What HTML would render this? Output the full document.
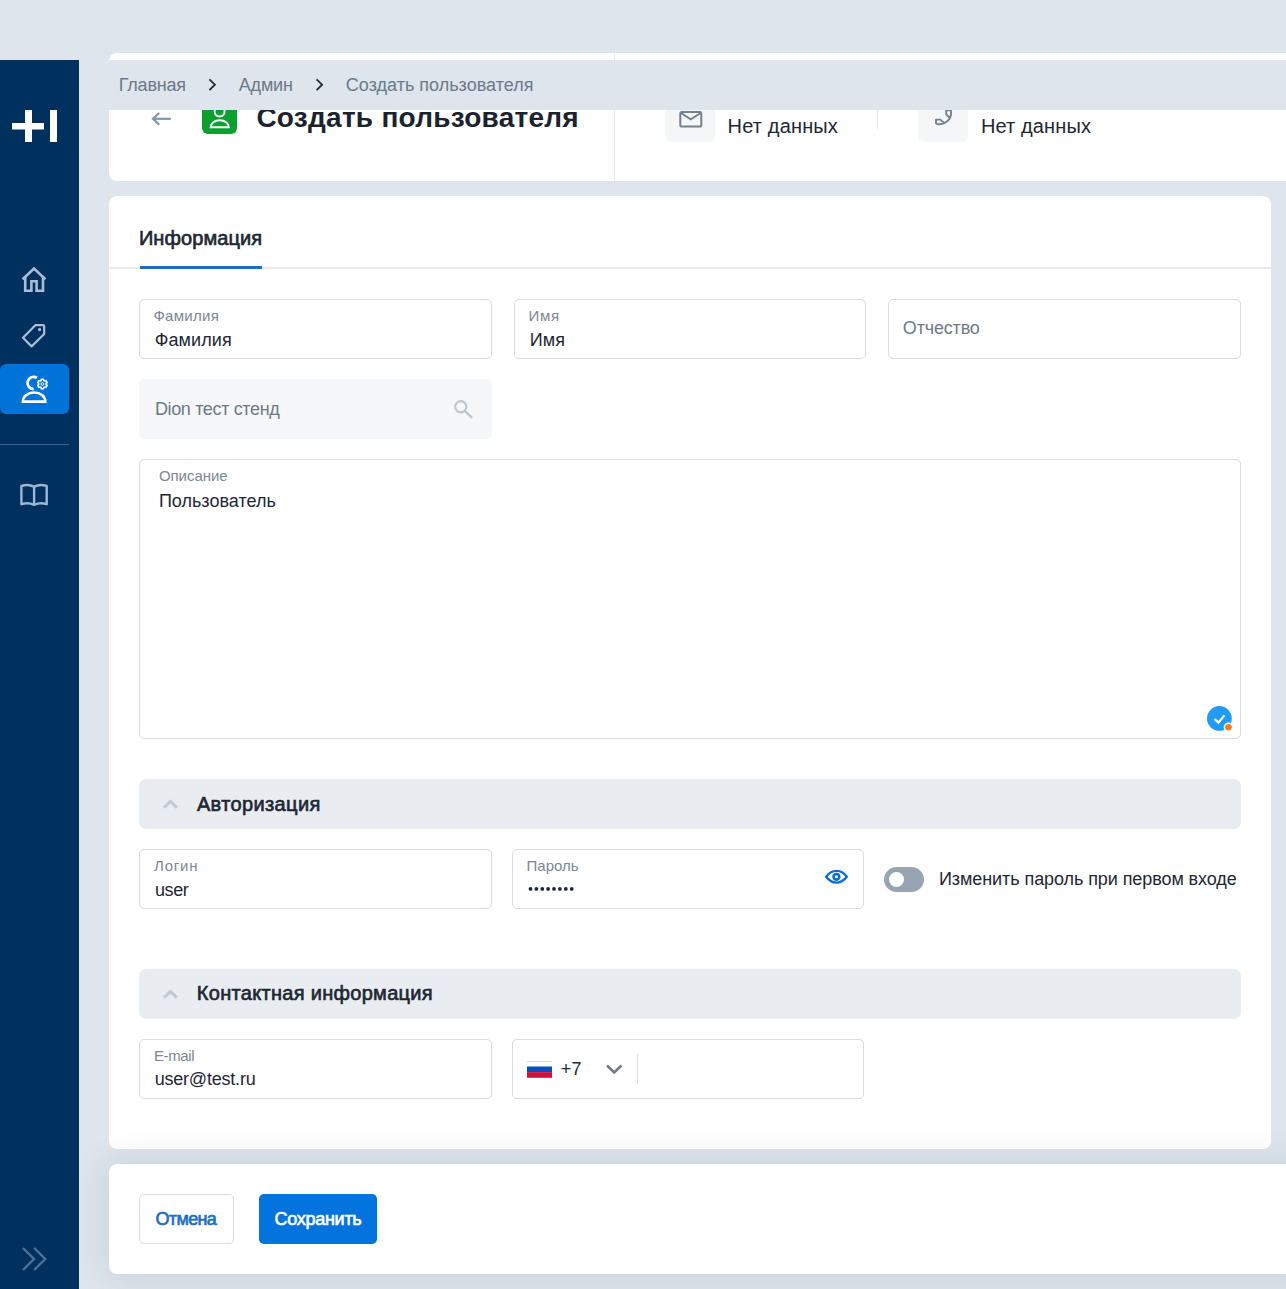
<!DOCTYPE html>
<html lang="ru">
<head>
<meta charset="utf-8">
<title>Создать пользователя</title>
<style>
html,body{margin:0;padding:0;}
body{width:1286px;height:1289px;overflow:hidden;position:relative;background:#dee5ec;font-family:"Liberation Sans",sans-serif;}
.a{position:absolute;box-sizing:border-box;}
.t{position:absolute;white-space:pre;font-family:"Liberation Sans",sans-serif;}
.card{background:#fff;border-radius:8px;}
.fld{border:1px solid #d9dcdf;border-radius:5px;background:#fff;}
.sec{background:#e9edf1;border-radius:7px;}
svg.ov{position:absolute;left:0;top:0;}
</style>
</head>
<body>
<!-- sidebar -->
<div class="a" style="left:0;top:60px;width:79px;height:1229px;background:#00315e;z-index:1"></div>
<div class="a" style="left:0;top:364px;width:69px;height:50px;background:#0073d9;border-radius:6px;z-index:1"></div>
<div class="a" style="left:0;top:444px;width:69px;height:1px;background:#3a6792;z-index:1"></div>

<!-- header card -->
<div class="a card" style="left:109px;top:53px;width:1200px;height:128px;z-index:1"></div>
<div class="a" style="left:614px;top:53px;width:1px;height:128px;background:#e6eaef;z-index:1"></div>
<div class="a" style="left:202px;top:98px;width:35px;height:36px;background:#0a9f2f;border-radius:6px;z-index:1"></div>
<div class="a" style="left:665px;top:92px;width:50px;height:50px;background:#f4f6f8;border-radius:7px;z-index:1"></div>
<div class="a" style="left:918px;top:92px;width:50px;height:50px;background:#f4f6f8;border-radius:7px;z-index:1"></div>
<div class="a" style="left:877px;top:100px;width:1px;height:29px;background:#e6eaef;z-index:1"></div>

<!-- breadcrumb overlay -->
<div class="a" style="left:79px;top:60px;width:1207px;height:50px;background:#dee5ec;z-index:5"></div>

<!-- info card -->
<div class="a card" style="left:109px;top:196px;width:1162px;height:953px;z-index:1"></div>
<div class="a" style="left:109px;top:267px;width:1162px;height:2px;background:#e8ecf0;z-index:1"></div>
<div class="a" style="left:140px;top:266px;width:122px;height:3px;background:#1b6fc6;z-index:2"></div>

<div class="a fld" style="left:139px;top:299px;width:353px;height:60px;z-index:1"></div>
<div class="a fld" style="left:514px;top:299px;width:352px;height:60px;z-index:1"></div>
<div class="a fld" style="left:888px;top:299px;width:353px;height:60px;z-index:1"></div>
<div class="a" style="left:139px;top:379px;width:353px;height:60px;background:#f5f7f9;border-radius:5px;z-index:1"></div>
<div class="a fld" style="left:139px;top:459px;width:1102px;height:280px;z-index:1"></div>

<div class="a sec" style="left:139px;top:779px;width:1102px;height:50px;z-index:1"></div>
<div class="a fld" style="left:139px;top:849px;width:353px;height:60px;z-index:1"></div>
<div class="a fld" style="left:512px;top:849px;width:352px;height:60px;z-index:1"></div>
<div class="a" style="left:884px;top:867px;width:40px;height:25px;background:#98a4b1;border-radius:13px;z-index:1"></div>
<div class="a" style="left:888.9px;top:871.9px;width:15px;height:15px;background:#fff;border-radius:50%;z-index:2"></div>

<div class="a sec" style="left:139px;top:969px;width:1102px;height:50px;z-index:1"></div>
<div class="a fld" style="left:139px;top:1039px;width:353px;height:60px;z-index:1"></div>
<div class="a fld" style="left:512px;top:1039px;width:352px;height:60px;z-index:1"></div>
<div class="a" style="left:637px;top:1054px;width:1px;height:30px;background:#d9dee3;z-index:2"></div>

<!-- footer -->
<div class="a card" style="left:109px;top:1164px;width:1200px;height:110px;z-index:1;box-shadow:0 0 36px rgba(45,65,95,0.14)"></div>
<div class="a" style="left:139px;top:1194px;width:95px;height:50px;border:1px solid #d9dcdf;border-radius:5px;background:#fff;z-index:2"></div>
<div class="a" style="left:259px;top:1194px;width:118px;height:50px;background:#0272dc;border-radius:5px;z-index:2"></div>

<!-- icons -->
<svg class="ov" width="1286" height="1289" viewBox="0 0 1286 1289" style="z-index:3" fill="none">
  <!-- logo -->
  <rect x="25" y="110" width="7" height="32" fill="#fff"/>
  <rect x="12" y="123" width="32" height="6.5" fill="#fff"/>
  <rect x="50" y="110" width="7" height="32" fill="#fff"/>
  <!-- home -->
  <g stroke="#a9bdd6" stroke-width="2.6" stroke-linejoin="miter">
    <path d="M22.6 279.2 L34 268.6 L45.4 279.2"/>
    <path d="M25.2 276.5 V290.7 H31.4 V281.2 H36.6 V290.7 H43 V276.5"/>
  </g>
  <!-- tag -->
  <g stroke="#a9bdd6" stroke-width="2.2" stroke-linejoin="round">
    <path d="M35.3 325.2 H42.8 Q44.2 325.2 44.2 326.6 V334 L31.6 346.4 L23 337.8 Z"/>
  </g>
  <circle cx="39.6" cy="329.6" r="1.6" fill="#a9bdd6"/>
  <!-- admin -->
  <g stroke="#fff" stroke-width="2.6" fill="none">
    <path d="M36.87 377.85 A6.1 6.1 0 1 0 33.7 389.1" stroke-width="2.8"/>
    <path d="M22.9 401.6 A10.5 8.6 0 0 1 45.3 401.6 Z"/>
  </g>
  <g transform="translate(0 0)">
    <path d="M43.52 379.13 L41.28 379.13 L41.07 380.55 L40.07 381.12 L38.74 380.59 L37.62 382.54 L38.75 383.42 L38.75 384.58 L37.62 385.46 L38.74 387.41 L40.07 386.88 L41.07 387.45 L41.28 388.87 L43.52 388.87 L43.73 387.45 L44.73 386.88 L46.06 387.41 L47.18 385.46 L46.05 384.58 L46.05 383.42 L47.18 382.54 L46.06 380.59 L44.73 381.12 L43.73 380.55 Z" stroke="#fff" stroke-width="1.5" stroke-linejoin="round" fill="none"/>
    <circle cx="42.4" cy="384.0" r="1.4" stroke="#fff" stroke-width="1" fill="none"/>
  </g>
  <!-- book -->
  <g stroke="#9db6d3" stroke-width="2.4" stroke-linejoin="round">
    <path d="M21.4 486 Q28 483.6 34.1 486.6 Q40.2 483.6 46.7 486 V504.2 Q40.2 502 34.1 504.8 Q28 502 21.4 504.2 Z"/>
    <path d="M34.1 486.6 V504.8"/>
  </g>
  <!-- collapse chevrons -->
  <g stroke="#4b7298" stroke-width="2.4">
    <path d="M23 1248 L34 1259 L23 1270"/>
    <path d="M34.2 1248 L45.2 1259 L34.2 1270"/>
  </g>
  <!-- back arrow -->
  <g stroke="#8593a3" stroke-width="2.2" stroke-linecap="butt">
    <path d="M153 118.8 H170.8"/>
    <path d="M159.2 113 L153 118.8 L159.2 124.8"/>
  </g>
  <!-- green user icon -->
  <g stroke="#fff" stroke-width="2">
    <circle cx="219.6" cy="111.6" r="5"/>
    <path d="M210.7 127.2 A9.05 7 0 0 1 228.8 127.2 Z"/>
  </g>
  <!-- mail -->
  <rect x="680.3" y="112" width="21" height="14.6" rx="1.6" stroke="#75818c" stroke-width="2"/>
  <path d="M681 113 L690.8 119.3 L700.6 113" stroke="#75818c" stroke-width="2"/>
  <!-- phone -->
  <path d="M946.2 110.4 H950.6 M946.2 109 V114.2 L949.4 117.8 M950.6 109 Q952 115 949.3 119.2 Q945 124.6 938.2 124.2 Q936 124 936 123.5 V119.6 H940.4 L943.8 122.6" stroke="#75818c" stroke-width="1.9" stroke-linejoin="round"/>
  <!-- search -->
  <circle cx="460.8" cy="406.8" r="5.6" stroke="#bfc6cd" stroke-width="2.2"/>
  <path d="M465 411 L471.3 417.2" stroke="#bfc6cd" stroke-width="2.4" stroke-linecap="round"/>
  <!-- grammar check badge -->
  <circle cx="1219.4" cy="718.4" r="12.4" fill="#229bf5"/>
  <path d="M1214.6 719 L1218.4 722.6 L1224.4 715.4" stroke="#fff" stroke-width="2.2"/>
  <circle cx="1228.5" cy="727.3" r="4.8" fill="#fff"/>
  <circle cx="1228.5" cy="727.3" r="3.3" fill="#f07d22"/>
  <!-- section chevrons -->
  <g stroke="#c2cad2" stroke-width="3">
    <path d="M164 807.6 L170.4 801.4 L176.8 807.6"/>
    <path d="M164 997.6 L170.4 991.4 L176.8 997.6"/>
  </g>
  <!-- eye -->
  <g stroke="#0a6fcf" stroke-width="2.3">
    <path d="M826.2 876.8 C829.5 872.3 833 870.9 836.5 870.9 C840 870.9 843.5 872.3 846.8 876.8 C843.5 881.3 840 882.7 836.5 882.7 C833 882.7 829.5 881.3 826.2 876.8 Z"/>
    <circle cx="836.4" cy="876.8" r="2.85" stroke-width="2.6"/>
  </g>
  <!-- password dots -->
  <g fill="#1d2733">
    <circle cx="530.5" cy="888.9" r="1.9"/><circle cx="536.4" cy="888.9" r="1.9"/><circle cx="542.3" cy="888.9" r="1.9"/><circle cx="548.1" cy="888.9" r="1.9"/>
    <circle cx="554" cy="888.9" r="1.9"/><circle cx="559.9" cy="888.9" r="1.9"/><circle cx="565.8" cy="888.9" r="1.9"/><circle cx="571.7" cy="888.9" r="1.9"/>
  </g>
  <!-- flag -->
  <rect x="527" y="1061" width="25" height="5.6" fill="#fff"/>
  <rect x="527" y="1061" width="25" height="0.8" fill="#c9d3dc"/>
  <rect x="527" y="1066.5" width="25" height="5.6" fill="#0b4fbd"/>
  <rect x="527" y="1072.1" width="25" height="5.7" fill="#d3103b"/>
  <!-- phone dropdown chevron -->
  <path d="M607 1065.5 L614.2 1072.5 L621.4 1065.5" stroke="#6f7b88" stroke-width="2.5"/>
</svg>

<svg class="ov" width="1286" height="1289" viewBox="0 0 1286 1289" style="z-index:6" fill="none">
  <g stroke="#1f2a36" stroke-width="1.8">
    <path d="M209.4 79.3 L214.9 84.7 L209.4 90.1"/>
    <path d="M316.6 79.3 L322.1 84.7 L316.6 90.1"/>
  </g>
</svg>
<div class="t" style="z-index:6;left:118.7px;top:75.6px;font-size:18px;line-height:18px;font-weight:400;color:#6b7a8a;letter-spacing:-0.183px">Главная</div>
<div class="t" style="z-index:6;left:238.8px;top:75.6px;font-size:18px;line-height:18px;font-weight:400;color:#6b7a8a;letter-spacing:-0.200px">Админ</div>
<div class="t" style="z-index:6;left:345.8px;top:75.6px;font-size:18px;line-height:18px;font-weight:400;color:#6b7a8a;letter-spacing:0.011px">Создать пользователя</div>
<div class="t" style="z-index:2;left:256.4px;top:103.6px;font-size:28px;line-height:28px;font-weight:700;color:#1a232e;letter-spacing:0.258px">Создать пользователя</div>
<div class="t" style="z-index:2;left:727.6px;top:115.7px;font-size:20px;line-height:20px;font-weight:400;color:#1d2733;letter-spacing:0.156px">Нет данных</div>
<div class="t" style="z-index:2;left:981.0px;top:115.7px;font-size:20px;line-height:20px;font-weight:400;color:#1d2733;letter-spacing:0.111px">Нет данных</div>
<div class="t" style="z-index:2;left:727.8px;top:94.0px;font-size:15px;line-height:15px;font-weight:400;color:#7b8794;letter-spacing:0.040px">E-mail</div>
<div class="t" style="z-index:2;left:982.1px;top:94.0px;font-size:15px;line-height:15px;font-weight:400;color:#7b8794;letter-spacing:-0.517px">Телефон</div>
<div class="t" style="z-index:2;left:138.9px;top:227.6px;font-size:20px;line-height:20px;font-weight:400;-webkit-text-stroke:0.65px currentColor;color:#1d2733;letter-spacing:0.089px">Информация</div>
<div class="t" style="z-index:2;left:153.4px;top:307.6px;font-size:15px;line-height:15px;font-weight:400;color:#7b8794;letter-spacing:0.300px">Фамилия</div>
<div class="t" style="z-index:2;left:154.7px;top:330.8px;font-size:18px;line-height:18px;font-weight:400;color:#1d2733;letter-spacing:0.100px">Фамилия</div>
<div class="t" style="z-index:2;left:528.6px;top:307.6px;font-size:15px;line-height:15px;font-weight:400;color:#7b8794;letter-spacing:0.700px">Имя</div>
<div class="t" style="z-index:2;left:529.7px;top:330.7px;font-size:18px;line-height:18px;font-weight:400;color:#1d2733;letter-spacing:0.100px">Имя</div>
<div class="t" style="z-index:2;left:902.8px;top:318.8px;font-size:18px;line-height:18px;font-weight:400;color:#6e7a87;letter-spacing:-0.171px">Отчество</div>
<div class="t" style="z-index:2;left:154.9px;top:399.8px;font-size:18px;line-height:18px;font-weight:400;color:#6e7a87;letter-spacing:-0.350px">Dion тест стенд</div>
<div class="t" style="z-index:2;left:158.9px;top:467.9px;font-size:15px;line-height:15px;font-weight:400;color:#7b8794;letter-spacing:-0.029px">Описание</div>
<div class="t" style="z-index:2;left:158.9px;top:492.0px;font-size:18px;line-height:18px;font-weight:400;color:#1d2733;letter-spacing:0.009px">Пользователь</div>
<div class="t" style="z-index:2;left:196.9px;top:794.2px;font-size:20px;line-height:20px;font-weight:400;-webkit-text-stroke:0.65px currentColor;color:#1d2733;letter-spacing:0.380px">Авторизация</div>
<div class="t" style="z-index:2;left:154.1px;top:857.7px;font-size:15px;line-height:15px;font-weight:400;color:#7b8794;letter-spacing:0.750px">Логин</div>
<div class="t" style="z-index:2;left:155.0px;top:880.7px;font-size:18px;line-height:18px;font-weight:400;color:#1d2733;letter-spacing:-0.433px">user</div>
<div class="t" style="z-index:2;left:526.6px;top:857.9px;font-size:15px;line-height:15px;font-weight:400;color:#7b8794;letter-spacing:-0.020px">Пароль</div>
<div class="t" style="z-index:2;left:939.0px;top:870.4px;font-size:18px;line-height:18px;font-weight:400;color:#1d2733;letter-spacing:-0.081px">Изменить пароль при первом входе</div>
<div class="t" style="z-index:2;left:196.8px;top:983.2px;font-size:20px;line-height:20px;font-weight:400;-webkit-text-stroke:0.65px currentColor;color:#1d2733;letter-spacing:0.300px">Контактная информация</div>
<div class="t" style="z-index:2;left:153.9px;top:1047.8px;font-size:15px;line-height:15px;font-weight:400;color:#7b8794;letter-spacing:-0.380px">E-mail</div>
<div class="t" style="z-index:2;left:154.7px;top:1070.2px;font-size:18px;line-height:18px;font-weight:400;color:#1d2733;letter-spacing:-0.209px">user@test.ru</div>
<div class="t" style="z-index:2;left:560.7px;top:1059.6px;font-size:18px;line-height:18px;font-weight:400;color:#1d2733;letter-spacing:0.200px">+7</div>
<div class="t" style="z-index:2;left:155.5px;top:1210.1px;font-size:18px;line-height:18px;font-weight:400;-webkit-text-stroke:0.65px currentColor;color:#1a6dc4;letter-spacing:-0.640px">Отмена</div>
<div class="t" style="z-index:2;left:274.5px;top:1210.1px;font-size:18px;line-height:18px;font-weight:400;-webkit-text-stroke:0.65px currentColor;color:#ffffff;letter-spacing:-0.275px">Сохранить</div>
</body>
</html>
